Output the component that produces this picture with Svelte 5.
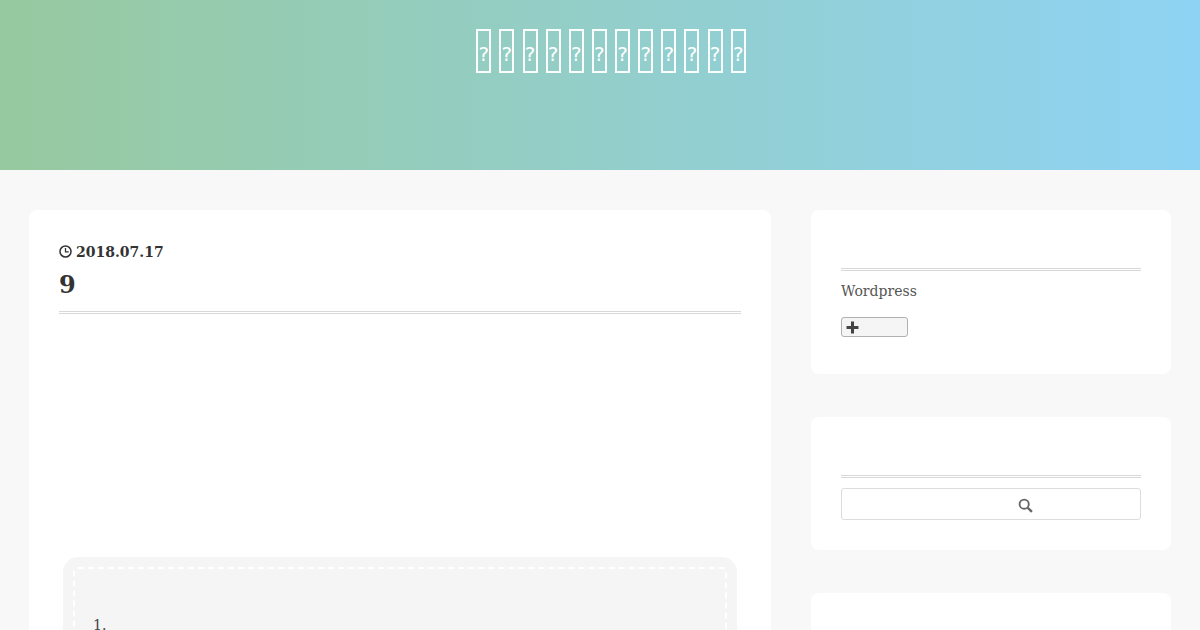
<script>
  const title = Array(12).fill('?');
</script>

<div class="page">
  <header class="hero">
    <h1 class="site-title">{#each title as c}<span class="tofu">{c}</span>{/each}</h1>
  </header>
  <div class="layout">
    <main class="card post">
      <div class="date">
        <svg class="clock" viewBox="0 0 12 12" width="13" height="13" aria-hidden="true">
          <circle cx="6" cy="6" r="5.1" fill="none" stroke="currentColor" stroke-width="1.4" />
          <path d="M6 2.8V6.4H9" fill="none" stroke="currentColor" stroke-width="1.2" />
        </svg>
        <span>2018.07.17</span>
      </div>
      <h2 class="post-title">9</h2>
      <div class="ad"></div>
      <div class="toc">
        <div class="toc-inner">
          <ol><li>1.</li></ol>
        </div>
      </div>
    </main>
    <aside class="side">
      <section class="card widget one">
        <div class="rule"></div>
        <p class="cat">Wordpress</p>
        <button class="expand" aria-label="expand">
          <svg viewBox="0 0 12 12" width="13" height="13" aria-hidden="true">
            <path d="M4.6 0.5H7.4V4.6H11.5V7.4H7.4V11.5H4.6V7.4H0.5V4.6H4.6Z" fill="currentColor" />
          </svg>
        </button>
      </section>
      <section class="card widget two">
        <div class="rule"></div>
        <div class="search">
          <svg viewBox="0 0 16 16" width="15" height="15" aria-hidden="true">
            <circle cx="6.6" cy="6.6" r="4.9" fill="none" stroke="currentColor" stroke-width="2" />
            <path d="M10.4 10.4L14.8 14.8" fill="none" stroke="currentColor" stroke-width="2.6" />
          </svg>
        </div>
      </section>
      <section class="card widget three"></section>
    </aside>
  </div>
</div>

<style>
  :global(body) {
    margin: 0;
    background: #f8f8f8;
    overflow: hidden;
  }
  .page {
    height: 630px;
    overflow: hidden;
    font-family: "DejaVu Serif", serif;
    color: #333;
  }
  .hero {
    height: 170px;
    background: linear-gradient(to right, #97c99f, #8fd3f4);
    box-sizing: border-box;
    padding: 29px 0 0 22px;
  }
  .site-title {
    margin: 0;
    display: flex;
    justify-content: center;
    gap: 8.15px;
    font-family: "DejaVu Sans", sans-serif;
    font-size: 20px;
    font-weight: 400;
    color: #fff;
  }
  .tofu {
    box-sizing: border-box;
    width: 15px;
    height: 44px;
    border: 2px solid rgba(255, 255, 255, 0.95);
    display: flex;
    align-items: flex-end;
    justify-content: center;
    line-height: 34px;
  }
  .layout {
    display: flex;
    gap: 40px;
    padding: 40px 29px 0;
    align-items: flex-start;
  }
  .card {
    background: #fff;
    border-radius: 8px;
    box-sizing: border-box;
  }
  .post {
    width: 742px;
    flex: none;
    padding: 30px;
    height: 600px;
  }
  .date {
    display: flex;
    align-items: center;
    gap: 4px;
    font-size: 14px;
    font-weight: 700;
    line-height: 24px;
  }
  .clock { margin-top: -2px; }
  .post-title {
    margin: 5px 0 0;
    font-size: 24px;
    line-height: 32px;
    font-weight: 700;
    padding-bottom: 10px;
    border-bottom: 3px double #d8d8d8;
  }
  .ad { height: 243px; }
  .toc {
    margin: 0 4px;
    background: #f5f5f5;
    border-radius: 15px;
    padding: 10px;
  }
  .toc-inner {
    border: 2px dashed #fff;
    border-radius: 5px;
    padding: 46px 18px 20px;
    height: 200px;
  }
  ol {
    list-style: none;
    margin: 0;
    padding: 0;
    font-size: 14px;
    line-height: 20px;
    color: #444;
  }
  .side {
    width: 360px;
    flex: none;
    display: flex;
    flex-direction: column;
    gap: 43px;
  }
  .widget { padding: 58px 30px 0; }
  .one { height: 164px; }
  .two { height: 133px; }
  .three { height: 100px; }
  .rule { border-bottom: 3px double #d8d8d8; }
  .cat {
    margin: 10px 0 0;
    font-size: 14px;
    line-height: 20px;
    color: #555;
  }
  .expand {
    display: flex;
    align-items: center;
    width: 67px;
    height: 20px;
    margin-top: 16px;
    padding: 0 0 0 4px;
    background: #f5f5f5;
    border: 1px solid #b0b0b0;
    border-radius: 3px;
    color: #444;
    box-sizing: border-box;
  }
  .search {
    margin-top: 10px;
    height: 32px;
    border: 1px solid #ddd;
    border-radius: 3px;
    box-sizing: border-box;
    display: flex;
    align-items: center;
    justify-content: center;
    padding: 2px 0 0 68px;
    color: #666;
  }
</style>
